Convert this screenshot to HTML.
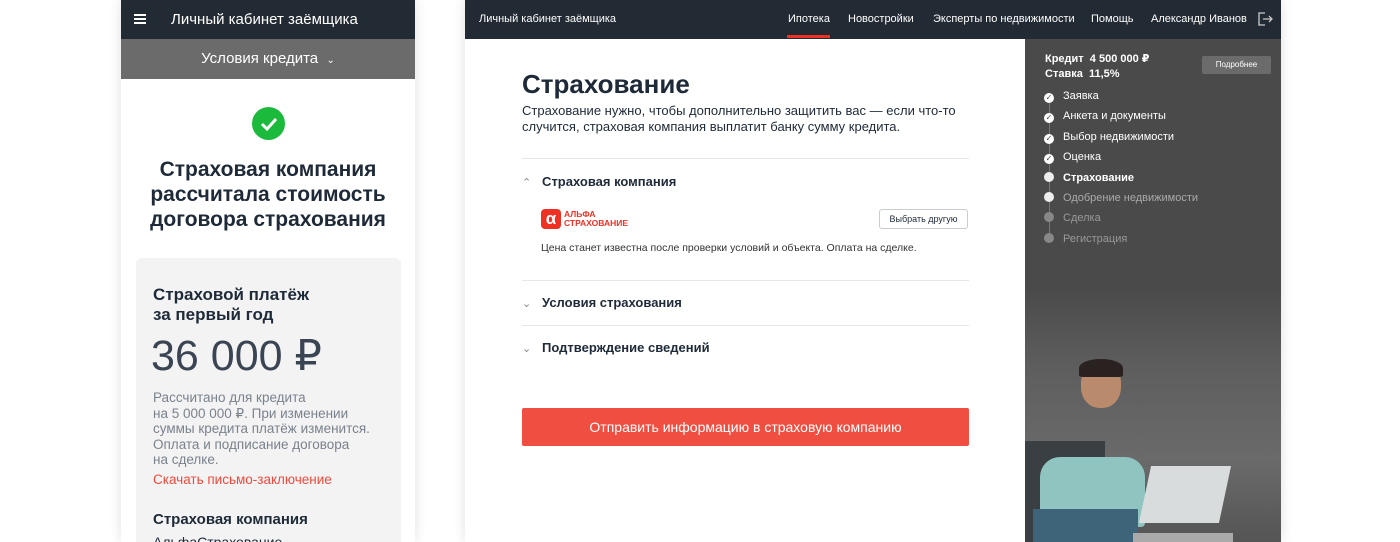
<!DOCTYPE html>
<html><head><meta charset="utf-8"><style>
*{margin:0;padding:0;box-sizing:border-box}
body{width:1400px;height:542px;background:#fff;position:relative;overflow:hidden;font-family:"Liberation Sans","DejaVu Sans",sans-serif;color:#1e2a38}
.abs{position:absolute}
.m{left:121px;top:0;width:294px;height:542px;background:#fff;box-shadow:0 0 12px rgba(0,0,0,.12);overflow:hidden}
.d{left:465px;top:0;width:816px;height:542px;background:#fff;box-shadow:0 0 12px rgba(0,0,0,.12);overflow:hidden}
.hd{background:#222a33;color:#fff}
.dot{display:inline-block;width:10px;height:10px;border-radius:50%;margin-right:9px;vertical-align:-1px;font-size:8px;line-height:10px;text-align:center}
</style></head><body>
<div class="abs m">
 <div class="abs hd" style="left:0;top:0;width:294px;height:39px">
  <div class="abs" style="left:13px;top:14px;width:12px;height:2px;background:#fff;box-shadow:0 4px 0 #fff,0 8px 0 #fff"></div>
  <div class="abs" style="left:50px;top:11px;font-size:15px">Личный кабинет заёмщика</div>
 </div>
 <div class="abs" style="left:0;top:39px;width:294px;height:40px;background:#6b6b6b;color:#fff;font-size:15px;text-align:center;line-height:40px">Условия кредита&nbsp;&nbsp;<span style="font-size:10px">&#8964;</span></div>
 <div class="abs" style="left:131px;top:107px;width:33px;height:33px;border-radius:50%;background:#1cba3c"><svg width="33" height="33"><path d="M10 17l5 5 9-10" stroke="#fff" stroke-width="3" fill="none"/></svg></div>
 <div class="abs" style="left:0;top:157px;width:294px;text-align:center;font-size:21px;font-weight:bold;line-height:25px">Страховая компания<br>рассчитала стоимость<br>договора страхования</div>
 <div class="abs" style="left:15px;top:258px;width:265px;height:300px;background:#f3f3f4;border-radius:6px">
  <div class="abs" style="left:17px;top:27px;font-size:17px;font-weight:bold;line-height:20px">Страховой платёж<br>за первый год</div>
  <div class="abs" style="left:15px;top:73px;font-size:43px;color:#3a4452">36 000 ₽</div>
  <div class="abs" style="left:17px;top:132px;font-size:13.5px;line-height:15.6px;color:#7a828c">Рассчитано для кредита<br>на 5 000 000 ₽. При изменении<br>суммы кредита платёж изменится.<br>Оплата и подписание договора<br>на сделке.</div>
  <div class="abs" style="left:17px;top:214px;font-size:13.5px;color:#f04a3c">Скачать письмо-заключение</div>
  <div class="abs" style="left:17px;top:253px;font-size:15px;font-weight:bold">Страховая компания</div>
  <div class="abs" style="left:17px;top:276px;font-size:14px">АльфаСтрахование</div>
 </div>
</div>
<div class="abs d">
 <div class="abs hd" style="left:0;top:0;width:816px;height:39px;font-size:11px">
  <div class="abs" style="left:14px;top:13px">Личный кабинет заёмщика</div>
  <div class="abs" style="left:323px;top:13px">Ипотека</div>
  <div class="abs" style="left:322px;top:35px;width:43px;height:3px;background:#ef3124"></div>
  <div class="abs" style="left:383px;top:13px">Новостройки</div>
  <div class="abs" style="left:468px;top:13px">Эксперты по недвижимости</div>
  <div class="abs" style="left:626px;top:13px">Помощь</div>
  <div class="abs" style="left:686px;top:13px">Александр Иванов</div>
  <svg class="abs" style="left:792px;top:11px" width="16" height="16"><path d="M8 2H2v12h6M6 8h9M12 5l3 3-3 3" stroke="#ccc" stroke-width="1.3" fill="none"/></svg>
 </div>
 <div class="abs" style="left:57px;top:69px;font-size:26px;font-weight:bold">Страхование</div>
 <div class="abs" style="left:57px;top:103px;font-size:13px;line-height:16px">Страхование нужно, чтобы дополнительно защитить вас — если что-то<br>случится, страховая компания выплатит банку сумму кредита.</div>
 <div class="abs" style="left:57px;top:158px;width:447px;border-top:1px solid #e6e7e9"></div>
 <div class="abs" style="left:57px;top:174px;font-size:13px;font-weight:bold"><span style="color:#888;font-weight:normal;font-size:11px">&#8963;</span>&nbsp;&nbsp; Страховая компания</div>
 <div class="abs" style="left:76px;top:209px;width:20px;height:20px;background:#ef3124;border-radius:4px;color:#fff;font-size:17px;text-align:center;line-height:19px;font-weight:bold">α</div>
 <div class="abs" style="left:99px;top:210px;font-size:8.5px;font-weight:bold;color:#ef3124;line-height:9px">АЛЬФА<br>СТРАХОВАНИЕ</div>
 <div class="abs" style="left:414px;top:209px;width:89px;height:20px;border:1px solid #c9ccd0;border-radius:3px;font-size:9px;text-align:center;line-height:18px">Выбрать другую</div>
 <div class="abs" style="left:76px;top:242px;font-size:10.5px;color:#333">Цена станет известна после проверки условий и объекта. Оплата на сделке.</div>
 <div class="abs" style="left:57px;top:280px;width:447px;border-top:1px solid #e6e7e9"></div>
 <div class="abs" style="left:57px;top:295px;font-size:13px;font-weight:bold"><span style="color:#888;font-weight:normal;font-size:11px">&#8964;</span>&nbsp;&nbsp; Условия страхования</div>
 <div class="abs" style="left:57px;top:325px;width:447px;border-top:1px solid #e6e7e9"></div>
 <div class="abs" style="left:57px;top:340px;font-size:13px;font-weight:bold"><span style="color:#888;font-weight:normal;font-size:11px">&#8964;</span>&nbsp;&nbsp; Подтверждение сведений</div>
 <div class="abs" style="left:57px;top:408px;width:447px;height:38px;background:#f04e40;border-radius:2px;color:#fff;font-size:14px;text-align:center;line-height:38px">Отправить информацию в страховую компанию</div>
 <div class="abs" style="left:560px;top:39px;width:256px;height:503px;background:linear-gradient(#4a4a4a 0,#4a4a4a 250px,#5e5e5e 330px,#6a6a6a 420px,#555 503px)">
  <div class="abs" style="left:20px;top:13px;color:#fff;font-size:11px;font-weight:bold;line-height:15px">Кредит&nbsp; 4 500 000 ₽<br>Ставка&nbsp; 11,5%</div>
  <div class="abs" style="left:177px;top:17px;width:69px;height:18px;background:#6b6b6b;border-radius:2px;color:#fff;font-size:8px;text-align:center;line-height:18px">Подробнее</div>
  <div class="abs" style="left:24px;top:57px;width:1px;height:143px;background:#777"></div>
  <div style="position:absolute;left:19px;top:47px;font-size:11px;line-height:20.4px;color:#fff">
   <div><span class="dot" style="background:#fff;color:#444">✓</span>Заявка</div>
   <div><span class="dot" style="background:#fff;color:#444">✓</span>Анкета и документы</div>
   <div><span class="dot" style="background:#fff;color:#444">✓</span>Выбор недвижимости</div>
   <div><span class="dot" style="background:#fff;color:#444">✓</span>Оценка</div>
   <div style="font-weight:bold"><span class="dot" style="background:#eee"></span>Страхование</div>
   <div style="color:#aaa"><span class="dot" style="background:#eee"></span>Одобрение недвижимости</div>
   <div style="color:#999"><span class="dot" style="background:#888"></span>Сделка</div>
   <div style="color:#999"><span class="dot" style="background:#888"></span>Регистрация</div>
  </div>
  <div class="abs" style="left:0;top:402px;width:80px;height:101px;background:#3a3f44"></div>
  <div class="abs" style="left:56px;top:323px;width:40px;height:46px;border-radius:45%;background:#b98a6c"></div>
  <div class="abs" style="left:54px;top:320px;width:44px;height:18px;border-radius:50% 50% 10% 10%;background:#2a2220"></div>
  <div class="abs" style="left:15px;top:418px;width:105px;height:70px;border-radius:20px 20px 4px 4px;background:#8fc4c0"></div>
  <div class="abs" style="left:8px;top:470px;width:105px;height:33px;background:#3d6478"></div>
  <div class="abs" style="left:108px;top:494px;width:100px;height:9px;background:#aaa"></div>
  <div class="abs" style="left:120px;top:427px;width:80px;height:57px;background:#d9dcdd;transform:skewX(-12deg)"></div>
 </div>
</div>
</body></html>
